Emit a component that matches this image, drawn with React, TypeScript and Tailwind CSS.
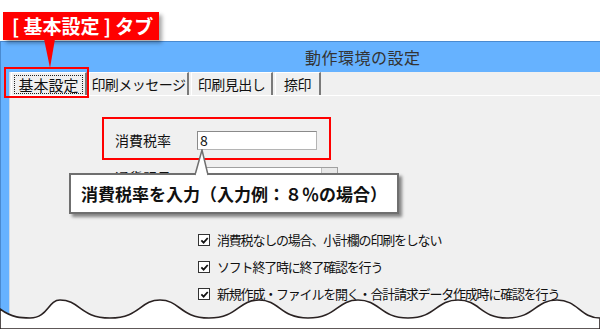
import React from "react";

function CheckRow({ label }: { label: string }) {
  return (
    <div className="flex h-[18px] items-center gap-[7px]">
      <span className="flex h-[12px] w-[12px] items-center justify-center border border-[#333] bg-white">
        <svg viewBox="0 0 10 10" className="h-[9px] w-[9px]">
          <path d="M1.5 4.8 L4 7.3 L8.6 2.2" fill="none" stroke="#111" strokeWidth="2" />
        </svg>
      </span>
      <span className="whitespace-nowrap text-[13px] tracking-[-1.2px] text-[#111]">{label}</span>
    </div>
  );
}

function Tab({ label, width, active = false }: { label: string; width: string; active?: boolean }) {
  return (
    <div
      className={`flex h-[23px] items-center justify-center border-l border-t border-white border-r-2 border-r-[#7a7a7a] bg-[#f0f0f0] text-[14px] text-[#111] ${width}`}
    >
      {active ? (
        <span className="border border-dotted border-[#222] px-[3px] text-[15px] leading-[17px]">{label}</span>
      ) : (
        <span className="tracking-[-0.5px]">{label}</span>
      )}
    </div>
  );
}

export default function App() {
  return (
    <div className="relative h-[329px] w-[600px] overflow-hidden bg-white font-['Noto_Sans_CJK_JP',sans-serif]">
      <div className="h-full pt-[41px]">
        <div className="flex h-full flex-col border-l border-t border-[#4a8ad0] bg-[#66b2ff]">
          <div className="flex h-[30px] items-center pl-[304px] text-[16px] tracking-[0.5px] text-[#333]">
            動作環境の設定
          </div>
          <div className="ml-[8px] flex flex-1 flex-col border-l border-[#c9d9ea] bg-[#f0f0f0]">
            <div className="flex gap-[2px] pl-[1px]">
              <Tab label="基本設定" width="w-[76px]" active />
              <Tab label="印刷メッセージ" width="w-[100px]" />
              <Tab label="印刷見出し" width="w-[82px]" />
              <Tab label="捺印" width="w-[46px]" />
            </div>
            <div className="flex-1 border-t border-white pl-[105px] pt-[35px] text-[14px] text-[#111]">
              <div className="flex h-[19px] items-center">
                <span className="w-[82px]">消費税率</span>
                <div className="flex h-[19px] w-[120px] items-center border border-[#b4b4b4] border-l-[#8a8a8a] border-t-[#8a8a8a] bg-white pl-[2px] text-[14px]">
                  8
                </div>
              </div>
              <div className="mt-[17px] flex h-[21px] items-center">
                <span className="w-[82px]">通貨記号</span>
                <div className="flex h-[21px] w-[141px] justify-end border border-[#a0a0a0] bg-white">
                  <div className="w-[16px] border-l border-[#c0c0c0] bg-[#e8e8e8]" />
                </div>
              </div>
              <div className="ml-[83px] mt-[43px] flex flex-col gap-[9px]">
                <CheckRow label="消費税なしの場合、小計欄の印刷をしない" />
                <CheckRow label="ソフト終了時に終了確認を行う" />
                <CheckRow label="新規作成・ファイルを開く・合計請求データ作成時に確認を行う" />
              </div>
            </div>
          </div>
        </div>
      </div>

      {/* annotation: tab callout */}
      <div className="absolute left-[3px] top-[12px] flex h-[28px] w-[156px] items-center whitespace-nowrap bg-[#ff0000] pl-[9px] text-[19px] font-bold text-white shadow-[3px_3px_4px_rgba(0,0,0,0.35)]">
        [ 基本設定 ] タブ
      </div>
      <svg className="absolute left-[40px] top-[39px]" width="20" height="30" viewBox="0 0 20 30">
        <path d="M4 0 L15 0 L10 29 Z" fill="#ff0000" />
      </svg>
      <div className="absolute left-[4px] top-[67px] h-[31px] w-[85px] border-2 border-[#ff0000]" />

      {/* annotation: tax rate */}
      <div className="absolute left-[102px] top-[117px] h-[43px] w-[229px] border-2 border-[#ff0000]" />
      <div className="absolute left-[69px] top-[173px] flex h-[41px] w-[330px] items-center whitespace-nowrap border-2 border-[#6f6f6f] bg-white pl-[10px] text-[17px] font-bold text-[#111] shadow-[3px_3px_3px_rgba(0,0,0,0.45)]">
        消費税率を入力（入力例：８％の場合）
      </div>
      <svg className="absolute left-[192px] top-[149px]" width="20" height="27" viewBox="0 0 20 27">
        <path d="M3 26 L10 1 L16 26" fill="#fff" stroke="#6f6f6f" strokeWidth="1.5" />
        <rect x="4.5" y="24" width="10" height="3" fill="#fff" />
      </svg>

      {/* torn-paper wave */}
      <svg className="absolute bottom-0 left-0" width="600" height="40" viewBox="0 289 600 40">
        <path
          d="M0 309 C12 318 22 318 30 318 C48 318 48 300 60 300 C80 300 80 318 110 318 C140 318 140 300 160 300 C180 300 180 318 209 318 C238 318 238 300 259 300 C280 300 280 318 308 318 C337 318 337 300 358 300 C380 300 380 318 408 318 C436 318 436 300 458 300 C480 300 480 318 507 318 C535 318 535 300 557 300 C578 300 580 318 600 318 L600 329 L0 329 Z"
          fill="#fff"
          stroke="#2a2222"
          strokeWidth="1.6"
        />
      </svg>
    </div>
  );
}
